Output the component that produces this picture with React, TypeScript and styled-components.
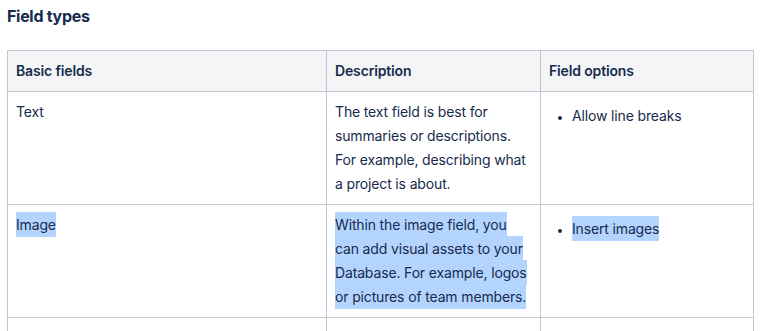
import styled, { createGlobalStyle } from 'styled-components';

const GlobalStyle = createGlobalStyle`
  body {
    margin: 0;
    background: #ffffff;
    font-family: Inter, "Noto Sans", sans-serif;
    color: #172b4d;
  }
`;

const StyledPage = styled.div`
  padding: 6px 7px 0;
  width: 746px;
`;

const Heading = styled.h2`
  margin: 0 0 24px;
  font-size: 16px;
  line-height: 20px;
  font-weight: 700;
  color: #172b4d;
  letter-spacing: -0.3px;
`;

const Table = styled.table`
  width: 746px;
  border-collapse: collapse;
  table-layout: fixed;
  font-size: 14px;
  line-height: 24px;
  letter-spacing: -0.15px;
`;

const Col = styled.col<{ $width: number }>`
  width: ${(p) => p.$width}px;
`;

const HeadCell = styled.th`
  background-color: #f4f5f7;
  border: 1px solid #c1c7d0;
  padding: 8px 9px 8px 8px;
  text-align: left;
  font-weight: 600;
  color: #172b4d;
`;

const Cell = styled.td`
  border: 1px solid #c1c7d0;
  padding: 8px 9px 8px 8px;
  vertical-align: top;
  color: #172b4d;
  height: 24px;
`;

const OptionList = styled.ul`
  margin: 4px 0 0;
  padding-left: 23px;
  list-style: disc;

  & > li::marker {
    font-size: 11px;
  }
`;

const Highlight = styled.span`
  background-color: #b3d4ff;
  padding: 4px 0;
  -webkit-box-decoration-break: clone;
  box-decoration-break: clone;
`;

export default function App() {
  return (
    <StyledPage>
      <GlobalStyle />
      <Heading>Field types</Heading>
      <Table>
        <colgroup>
          <Col $width={319} />
          <Col $width={214} />
          <Col $width={213} />
        </colgroup>
        <thead>
          <tr>
            <HeadCell>Basic fields</HeadCell>
            <HeadCell>Description</HeadCell>
            <HeadCell>Field options</HeadCell>
          </tr>
        </thead>
        <tbody>
          <tr>
            <Cell>Text</Cell>
            <Cell>
              The text field is best for summaries or descriptions. For example,
              describing what a project is about.
            </Cell>
            <Cell>
              <OptionList>
                <li>Allow line breaks</li>
              </OptionList>
            </Cell>
          </tr>
          <tr>
            <Cell>
              <Highlight>Image</Highlight>
            </Cell>
            <Cell>
              <Highlight>
                Within the image field, you can add visual assets to your
                Database. For example, logos or pictures of team members.
              </Highlight>
            </Cell>
            <Cell>
              <OptionList>
                <li>
                  <Highlight>Insert images</Highlight>
                </li>
              </OptionList>
            </Cell>
          </tr>
          <tr>
            <Cell />
            <Cell />
            <Cell />
          </tr>
        </tbody>
      </Table>
    </StyledPage>
  );
}
